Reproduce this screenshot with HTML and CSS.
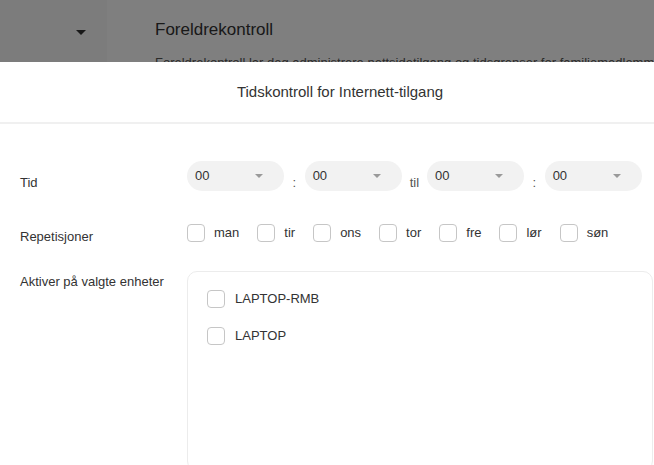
FILE: index.html
```html
<!DOCTYPE html>
<html lang="nb">
<head>
    <meta charset="UTF-8">
    <meta name="viewport" content="width=device-width, initial-scale=1.0">
    <title>Foreldrekontroll</title>
    <link rel="stylesheet" href="styles.css">
</head>
<body>
    <div class="page">
        <aside class="side">
            <span class="caret"></span>
        </aside>
        <main class="content">
            <h2>Foreldrekontroll</h2>
            <p>Foreldrekontroll lar deg administrere nettsidetilgang og tidsgrenser for familiemedlemmer.</p>
        </main>
    </div>

    <div class="mask"></div>

    <div class="dialog">
        <div class="dialog-head">Tidskontroll for Internett-tilgang</div>
        <div class="dialog-body">
            <div class="row row-time">
                <div class="label">Tid</div>
                <div class="times">
                    <div class="pick">00<span class="arrow"></span></div>
                    <span class="sep colon">:</span>
                    <div class="pick">00<span class="arrow"></span></div>
                    <span class="sep">til</span>
                    <div class="pick">00<span class="arrow"></span></div>
                    <span class="sep colon">:</span>
                    <div class="pick">00<span class="arrow"></span></div>
                </div>
            </div>

            <div class="row row-days">
                <div class="label">Repetisjoner</div>
                <div class="days">
                    <label class="check"><span class="box"></span>man</label>
                    <label class="check"><span class="box"></span>tir</label>
                    <label class="check"><span class="box"></span>ons</label>
                    <label class="check"><span class="box"></span>tor</label>
                    <label class="check"><span class="box"></span>fre</label>
                    <label class="check"><span class="box"></span>lør</label>
                    <label class="check"><span class="box"></span>søn</label>
                </div>
            </div>

            <div class="row row-devices">
                <div class="label">Aktiver på valgte enheter</div>
                <div class="devices">
                    <label class="check device"><span class="box"></span>LAPTOP-RMB</label>
                    <label class="check device"><span class="box"></span>LAPTOP</label>
                </div>
            </div>
        </div>
    </div>
</body>
</html>
```

FILE: styles.css
```css
*{
    box-sizing: border-box;
}
body{
    margin: 0;
    width: 654px;
    height: 465px;
    overflow: hidden;
    position: relative;
    font-family: "Liberation Sans", Arial, sans-serif;
    color: #333;
    background-color: white;
}

/* page behind the dialog */
.page{
    display: flex;
    height: 465px;
}
.side{
    width: 107px;
    flex-shrink: 0;
    background-color: #f9f9f9;
    padding: 30px 0 0 76px;
}
.caret{
    display: block;
    width: 0;
    height: 0;
    border-left: 5px solid transparent;
    border-right: 5px solid transparent;
    border-top: 5px solid #333;
}
.content{
    flex: 1;
    min-width: 0;
    padding: 20px 0 0 48px;
    white-space: nowrap;
    overflow: hidden;
}
.content h2{
    margin: 0;
    font-size: 17px;
    line-height: 20px;
    font-weight: normal;
}
.content p{
    margin: 15px 0 0;
    font-size: 13px;
    line-height: 16px;
    color: #555;
}
.mask{
    position: absolute;
    top: 0;
    left: 0;
    right: 0;
    bottom: 0;
    background-color: rgba(0, 0, 0, 0.5);
}

/* dialog */
.dialog{
    position: absolute;
    top: 62px;
    left: 0;
    bottom: 0;
    width: 680px;
    overflow: hidden;
    background-color: white;
}
.dialog-head{
    height: 62px;
    border-bottom: 2px solid #f0f0f0;
    text-align: center;
    font-size: 15px;
    line-height: 60px;
    color: #333;
}
.dialog-body{
    padding: 37px 27px 0 20px;
}
.row{
    display: flex;
    font-size: 13px;
}
.label{
    width: 167px;
    flex-shrink: 0;
    line-height: 16px;
}
.row-time{
    align-items: flex-end;
}
.times{
    display: flex;
    align-items: flex-end;
    gap: 8px;
}
.pick{
    position: relative;
    width: 97px;
    height: 30px;
    border-radius: 15px;
    background-color: #f2f2f2;
    padding-left: 8px;
    line-height: 30px;
    color: #333;
}
.arrow{
    position: absolute;
    right: 21px;
    top: 13px;
    width: 0;
    height: 0;
    border-left: 4px solid transparent;
    border-right: 4px solid transparent;
    border-top: 4px solid #9a9a9a;
}
.sep{
    line-height: 16px;
    color: #555;
}
.colon{
    padding: 0 0.5px;
}

.row-days{
    margin-top: 33px;
    height: 18px;
}
.row-days .label{
    padding-top: 4px;
    line-height: 18px;
}
.days{
    display: flex;
    gap: 18px;
}
.check{
    display: flex;
    align-items: center;
    line-height: 18px;
    color: #333;
}
.box{
    width: 18px;
    height: 18px;
    border: 1px solid #c6c6c6;
    border-radius: 4px;
    margin-right: 9px;
    background-color: white;
}

.row-devices{
    margin-top: 29px;
}
.row-devices .label{
    padding-top: 2px;
    line-height: 18px;
}
.devices{
    width: 466px;
    height: 200px;
    border: 1px solid #ececec;
    border-radius: 10px;
    padding: 18px 0 0 19px;
    display: flex;
    flex-direction: column;
    gap: 19px;
}
.device .box{
    margin-right: 10px;
}
```
